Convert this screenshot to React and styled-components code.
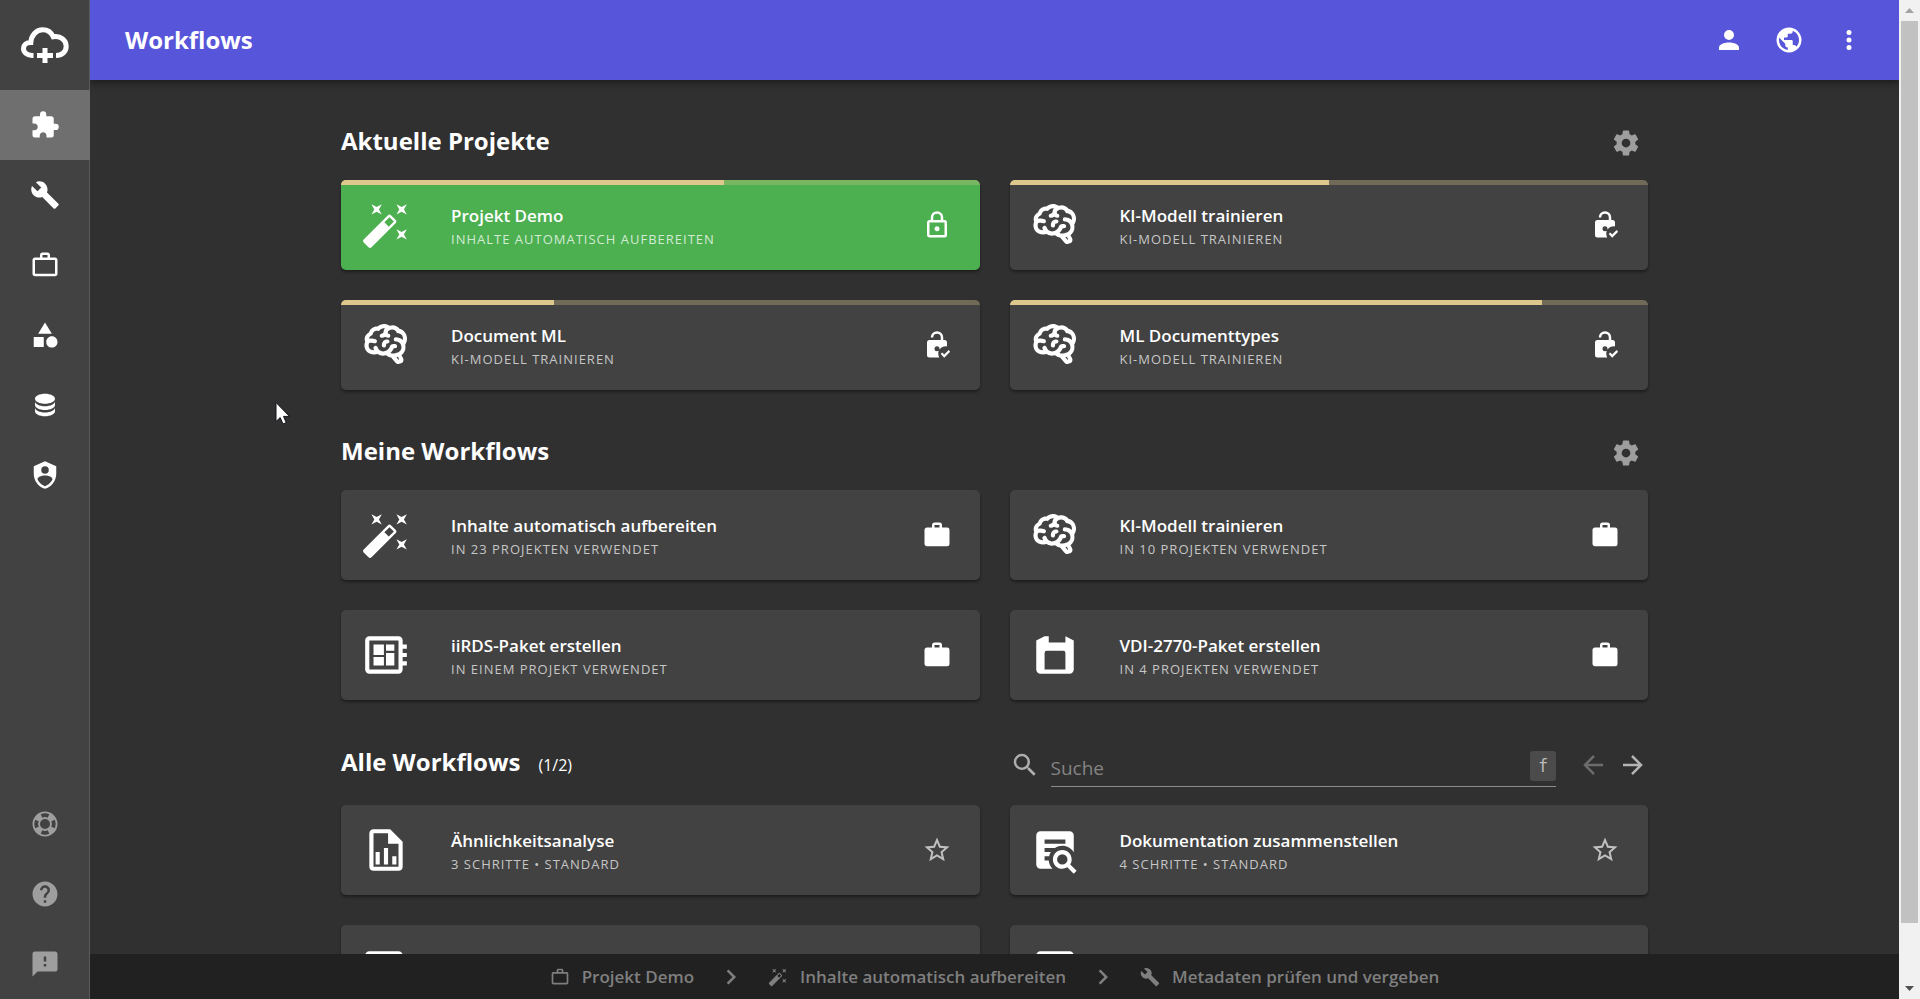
import React, { useState } from 'react';
import styled, { createGlobalStyle, ThemeProvider } from 'styled-components';

const theme = {
  primary: '#5755d9',
  background: '#303030',
  surface: '#424242',
  surfaceActive: '#6f6f6f',
  footer: '#212121',
  success: '#4caf50',
  accent: '#dfc88c',
  text: '#ffffff',
  textSecondary: '#c6c6c6',
  textMuted: '#9e9e9e',
  textDisabled: '#7f7f7f',
};

const GlobalStyle = createGlobalStyle`
  * {
    box-sizing: border-box;
  }

  body {
    margin: 0;
    background-color: #303030;
    color: #ffffff;
    font-family: 'Open Sans', 'Noto Sans', sans-serif;
  }

  button {
    padding: 0;
    border: none;
    background: none;
    color: inherit;
    font: inherit;
    cursor: pointer;
  }
`;

const paths = {
  puzzle: 'M20.5,11H19V7C19,5.89 18.1,5 17,5H13V3.5A2.5,2.5 0 0,0 10.5,1A2.5,2.5 0 0,0 8,3.5V5H4A2,2 0 0,0 2,7V10.8H3.5C5,10.8 6.2,12 6.2,13.5C6.2,15 5,16.2 3.5,16.2H2V20A2,2 0 0,0 4,22H7.8V20.5C7.8,19 9,17.8 10.5,17.8C12,17.8 13.2,19 13.2,20.5V22H17A2,2 0 0,0 19,20V16H20.5A2.5,2.5 0 0,0 23,13.5A2.5,2.5 0 0,0 20.5,11Z',
  wrench: 'M22.7,19L13.6,9.9C14.5,7.6 14,4.9 12.1,3C10.1,1 7.1,0.6 4.7,1.7L9,6L6,9L1.6,4.7C0.4,7.1 0.9,10.1 2.9,12.1C4.8,14 7.5,14.5 9.8,13.6L18.9,22.7C19.3,23.1 19.9,23.1 20.3,22.7L22.6,20.4C23.1,20 23.1,19.3 22.7,19Z',
  briefcaseOutline: 'M20,6C20.58,6 21.05,6.2 21.42,6.59C21.8,7 22,7.45 22,8V19C22,19.55 21.8,20 21.42,20.41C21.05,20.8 20.58,21 20,21H4C3.42,21 2.95,20.8 2.58,20.41C2.2,20 2,19.55 2,19V8C2,7.45 2.2,7 2.58,6.59C2.95,6.2 3.42,6 4,6H8V4C8,3.42 8.2,2.95 8.58,2.58C8.95,2.2 9.42,2 10,2H14C14.58,2 15.05,2.2 15.42,2.58C15.8,2.95 16,3.42 16,4V6H20M4,8V19H20V8H4M14,6V4H10V6H14Z',
  briefcase: 'M10,2H14A2,2 0 0,1 16,4V6H20A2,2 0 0,1 22,8V19A2,2 0 0,1 20,21H4C2.89,21 2,20.1 2,19V8C2,6.89 2.89,6 4,6H8V4C8,2.89 8.89,2 10,2M14,6V4H10V6H14Z',
  shape: 'M11,13.5V21.5H3V13.5H11M12,2L17.5,11H6.5L12,2M17.5,13C20,13 22,15 22,17.5C22,20 20,22 17.5,22C15,22 13,20 13,17.5C13,15 15,13 17.5,13Z',
  database: 'M12,3C7.58,3 4,4.79 4,7C4,9.21 7.58,11 12,11C16.42,11 20,9.21 20,7C20,4.79 16.42,3 12,3M4,9V12C4,14.21 7.58,16 12,16C16.42,16 20,14.21 20,12V9C20,11.21 16.42,13 12,13C7.58,13 4,11.21 4,9M4,14V17C4,19.21 7.58,21 12,21C16.42,21 20,19.21 20,17V14C20,16.21 16.42,18 12,18C7.58,18 4,16.21 4,14Z',
  shieldAccount: 'M12,1L3,5V11C3,16.55 6.84,21.74 12,23C17.16,21.74 21,16.55 21,11V5L12,1M12,5A3,3 0 0,1 15,8A3,3 0 0,1 12,11A3,3 0 0,1 9,8A3,3 0 0,1 12,5M17.13,17C15.92,18.85 14.11,20.24 12,20.92C9.89,20.24 8.08,18.85 6.87,17C6.53,16.5 6.24,16 6,15.47C6,13.82 8.71,12.47 12,12.47C15.29,12.47 18,13.79 18,15.47C17.76,16 17.47,16.5 17.13,17Z',
  lifebuoy: 'M19.79,15.41C20.74,13.24 20.74,10.75 19.79,8.59L17.05,9.83C17.65,11.21 17.65,12.78 17.06,14.17L19.79,15.41M15.42,4.21C13.25,3.26 10.76,3.26 8.59,4.21L9.83,6.94C11.22,6.35 12.79,6.35 14.18,6.95L15.42,4.21M4.21,8.58C3.26,10.76 3.26,13.24 4.21,15.42L6.95,14.17C6.35,12.79 6.35,11.21 6.95,9.82L4.21,8.58M8.59,19.79C10.76,20.74 13.25,20.74 15.42,19.78L14.18,17.05C12.8,17.65 11.22,17.65 9.84,17.06L8.59,19.79M12,2A10,10 0 0,1 22,12A10,10 0 0,1 12,22C6.47,22 2,17.5 2,12A10,10 0 0,1 12,2M12,8A4,4 0 0,0 8,12A4,4 0 0,0 12,16A4,4 0 0,0 16,12A4,4 0 0,0 12,8Z',
  help: 'M15.07,11.25L14.17,12.17C13.45,12.89 13,13.5 13,15H11V14.5C11,13.39 11.45,12.39 12.17,11.67L13.41,10.41C13.78,10.05 14,9.55 14,9C14,7.89 13.1,7 12,7A2,2 0 0,0 10,9H8A4,4 0 0,1 12,5A4,4 0 0,1 16,9C16,9.88 15.64,10.67 15.07,11.25M13,19H11V17H13M12,2A10,10 0 0,0 2,12A10,10 0 0,0 12,22A10,10 0 0,0 22,12C22,6.47 17.5,2 12,2Z',
  feedback: 'M13,10H11V6H13M13,14H11V12H13M20,2H4A2,2 0 0,0 2,4V22L6,18H20A2,2 0 0,0 22,16V4C22,2.89 21.1,2 20,2Z',
  account: 'M12,4A4,4 0 0,1 16,8A4,4 0 0,1 12,12A4,4 0 0,1 8,8A4,4 0 0,1 12,4M12,14C16.42,14 20,15.79 20,18V20H4V18C4,15.79 7.58,14 12,14Z',
  earth: 'M17.9,17.39C17.64,16.59 16.89,16 16,16H15V13A1,1 0 0,0 14,12H8V10H10A1,1 0 0,0 11,9V7H13A2,2 0 0,0 15,5V4.59C17.93,5.77 20,8.64 20,12C20,14.08 19.2,15.97 17.9,17.39M11,19.93C7.05,19.44 4,16.08 4,12C4,11.38 4.08,10.78 4.21,10.21L9,15V16A2,2 0 0,0 11,18M12,2A10,10 0 0,0 2,12A10,10 0 0,0 12,22A10,10 0 0,0 22,12A10,10 0 0,0 12,2Z',
  dots: 'M12,16A2,2 0 0,1 14,18A2,2 0 0,1 12,20A2,2 0 0,1 10,18A2,2 0 0,1 12,16M12,10A2,2 0 0,1 14,12A2,2 0 0,1 12,14A2,2 0 0,1 10,12A2,2 0 0,1 12,10M12,4A2,2 0 0,1 14,6A2,2 0 0,1 12,8A2,2 0 0,1 10,6A2,2 0 0,1 12,4Z',
  cog: 'M12,15.5A3.5,3.5 0 0,1 8.5,12A3.5,3.5 0 0,1 12,8.5A3.5,3.5 0 0,1 15.5,12A3.5,3.5 0 0,1 12,15.5M19.43,12.97C19.47,12.65 19.5,12.33 19.5,12C19.5,11.67 19.47,11.34 19.43,11L21.54,9.37C21.73,9.22 21.78,8.95 21.66,8.73L19.66,5.27C19.54,5.05 19.27,4.96 19.05,5.05L16.56,6.05C16.04,5.66 15.5,5.32 14.87,5.07L14.5,2.42C14.46,2.18 14.25,2 14,2H10C9.75,2 9.54,2.18 9.5,2.42L9.13,5.07C8.5,5.32 7.96,5.66 7.44,6.05L4.95,5.05C4.73,4.96 4.46,5.05 4.34,5.27L2.34,8.73C2.21,8.95 2.27,9.22 2.46,9.37L4.57,11C4.53,11.34 4.5,11.67 4.5,12C4.5,12.33 4.53,12.65 4.57,12.97L2.46,14.63C2.27,14.78 2.21,15.05 2.34,15.27L4.34,18.73C4.46,18.95 4.73,19.03 4.95,18.95L7.44,17.94C7.96,18.34 8.5,18.68 9.13,18.93L9.5,21.58C9.54,21.82 9.75,22 10,22H14C14.25,22 14.46,21.82 14.5,21.58L14.87,18.93C15.5,18.67 16.04,18.34 16.56,17.94L19.05,18.95C19.27,19.03 19.54,18.95 19.66,18.73L21.66,15.27C21.78,15.05 21.73,14.78 21.54,14.63L19.43,12.97Z',
  wand: 'M7.5,5.6L5,7L6.4,4.5L5,2L7.5,3.4L10,2L8.6,4.5L10,7L7.5,5.6M19.5,15.4L22,14L20.6,16.5L22,19L19.5,17.6L17,19L18.4,16.5L17,14L19.5,15.4M22,2L20.6,4.5L22,7L19.5,5.6L17,7L18.4,4.5L17,2L19.5,3.4L22,2M13.34,12.78L15.78,10.34L13.66,8.22L11.22,10.66L13.34,12.78M14.37,7.29L16.71,9.63C17.1,10 17.1,10.65 16.71,11.04L5.04,22.71C4.65,23.1 4,23.1 3.63,22.71L1.29,20.37C0.9,20 0.9,19.35 1.29,18.96L12.96,7.29C13.35,6.9 14,6.9 14.37,7.29Z',
  brain: 'M21.33,12.91C21.42,14.46 20.71,15.95 19.44,16.86L20.21,18.35C20.44,18.8 20.47,19.33 20.27,19.8C20.08,20.27 19.69,20.64 19.21,20.8L18.42,21.05C18.25,21.11 18.06,21.14 17.88,21.14C17.37,21.14 16.89,20.91 16.56,20.5L14.44,18C13.55,17.85 12.71,17.47 12,16.9C11.5,17.05 11,17.13 10.5,17.13C9.62,17.13 8.74,16.86 8,16.34C7.47,16.5 6.93,16.57 6.38,16.56C5.59,16.57 4.81,16.41 4.08,16.11C2.65,15.47 1.7,14.07 1.65,12.5C1.57,11.78 1.69,11.05 2,10.39C1.71,9.64 1.68,8.82 1.93,8.06C2.3,7.11 3,6.32 3.87,5.82C4.45,4.13 6.08,3 7.87,3.12C9.47,1.62 11.92,1.46 13.7,2.75C14.12,2.64 14.56,2.58 15,2.58C16.36,2.55 17.65,3.15 18.5,4.22C20.54,4.75 22,6.57 22.08,8.69C22.13,9.8 21.83,10.89 21.22,11.82C21.29,12.18 21.33,12.54 21.33,12.91M16.33,11.5C16.9,11.57 17.35,12 17.35,12.57A1,1 0 0,1 16.35,13.57H15.72C15.4,14.47 14.84,15.26 14.1,15.86C14.35,15.95 14.61,16 14.87,16.07C20,16 19.4,12.87 19.4,12.82C19.34,11.39 18.14,10.27 16.71,10.33A1,1 0 0,1 15.71,9.33A1,1 0 0,1 16.71,8.33C17.94,8.36 19.12,8.82 20.04,9.63C20.09,9.34 20.12,9.04 20.12,8.74C20.06,7.5 19.5,6.42 17.25,6.21C16,3.25 12.85,4.89 12.85,5.81V5.81C12.82,6.04 13.06,6.53 13.1,6.56A1,1 0 0,1 14.1,7.56C14.1,8.11 13.65,8.56 13.1,8.56V8.56C12.57,8.54 12.07,8.34 11.67,8C11.19,8.31 10.64,8.5 10.07,8.56V8.56C9.5,8.61 9.03,8.21 9,7.66C8.92,7.1 9.33,6.61 9.88,6.56C10.04,6.54 10.82,6.42 10.82,5.79V5.79C10.82,5.13 11.07,4.5 11.5,4C10.58,3.75 9.59,4.08 8.59,5.29C6.75,5 6,5.25 5.45,7.2C4.5,7.67 4,8 3.78,9C4.86,8.78 5.97,8.87 7,9.25C7.5,9.44 7.78,10 7.59,10.54C7.4,11.06 6.82,11.32 6.3,11.13C5.57,10.81 4.75,10.79 4,11.07C3.68,11.34 3.68,11.9 3.68,12.34C3.68,13.08 4.05,13.77 4.68,14.17C5.21,14.44 5.8,14.58 6.39,14.57C6.24,14.31 6.11,14.04 6,13.76C5.81,13.22 6.1,12.63 6.64,12.44C7.18,12.25 7.77,12.54 7.96,13.08C8.36,14.22 9.38,15 10.58,15.13C11.95,15.06 13.17,14.25 13.77,13C14,11.62 15.11,11.5 16.33,11.5M18.33,18.97L17.71,17.67L17,17.83L18,19.08L18.33,18.97M13.68,10.36C13.7,9.83 13.3,9.38 12.77,9.33C12.06,9.29 11.37,9.53 10.84,10C10.27,10.58 9.97,11.38 10,12.19A1,1 0 0,0 11,13.19C11.57,13.19 12,12.74 12,12.19C12,11.92 12.07,11.65 12.23,11.43C12.35,11.33 12.5,11.28 12.66,11.28C13.21,11.31 13.68,10.9 13.68,10.36Z',
  lock: 'M12,17C10.89,17 10,16.1 10,15C10,13.89 10.89,13 12,13A2,2 0 0,1 14,15A2,2 0 0,1 12,17M18,20V10H6V20H18M18,8A2,2 0 0,1 20,10V20A2,2 0 0,1 18,22H6C4.89,22 4,21.1 4,20V10C4,8.89 4.89,8 6,8H7V6A5,5 0 0,1 12,1A5,5 0 0,1 17,6V8H18M12,3A3,3 0 0,0 9,6V8H15V6A3,3 0 0,0 12,3Z',
  lockOpenCheck: 'M18,8A2,2 0 0,1 20,10V13.1C19.7,13 19.3,13 19,13C15.7,13 13,15.7 13,19C13,20.1 13.3,21.1 13.8,22H6A2,2 0 0,1 4,20V10A2,2 0 0,1 6,8H15V6A3,3 0 0,0 9,6H7A5,5 0 0,1 17,6V8H18M12,13A2,2 0 0,0 10,15A2,2 0 0,0 12,17A2,2 0 0,0 14,15A2,2 0 0,0 12,13M17.75,22.16L15,19.16L16.16,18L17.75,19.59L21.34,16L22.5,17.41L17.75,22.16Z',
  board: 'M22,9V7H20V5A2,2 0 0,0 18,3H4A2,2 0 0,0 2,5V19A2,2 0 0,0 4,21H18A2,2 0 0,0 20,19V17H22V15H20V13H22V11H20V9H22M18,19H4V5H18V19M6,13H11V17H6V13M12,7H16V10H12V7M6,7H11V12H6V7M12,11H16V17H12V11Z',
  disk: 'M3,5L7,3H9V6H17V3L21,5V19A2,2 0 0,1 19,21H5A2,2 0 0,1 3,19V5M7,11V19H17V11A1,1 0 0,0 16,10H8A1,1 0 0,0 7,11Z',
  fileChart: 'M14,2H6C4.89,2 4,2.9 4,4V20C4,21.11 4.89,22 6,22H18C19.11,22 20,21.11 20,20V8L14,2M18,20H6V4H13V9H18V20M9,13V19H7V13H9M15,15V19H17V15H15M11,11V19H13V11H11Z',
  textSearch: 'M15.5,12C18,12 20,14 20,16.5C20,17.38 19.75,18.21 19.31,18.9L22.39,22L21,23.39L17.88,20.32C17.19,20.75 16.37,21 15.5,21C13,21 11,19 11,16.5C11,14 13,12 15.5,12M15.5,14A2.5,2.5 0 0,0 13,16.5A2.5,2.5 0 0,0 15.5,19A2.5,2.5 0 0,0 18,16.5A2.5,2.5 0 0,0 15.5,14M5,3H19A2,2 0 0,1 21,5V13.03C19.85,11.2 17.8,10 15.5,10C14.2,10 13,10.4 12,11H7V13H10C9.6,13.6 9.3,14.3 9.17,15H7V17H9C9.1,18.5 9.8,20 10.81,21H5A2,2 0 0,1 3,19V5A2,2 0 0,1 5,3M7,7V9H17V7H7Z',
  package: 'M5,3H19A2,2 0 0,1 21,5V19A2,2 0 0,1 19,21H5A2,2 0 0,1 3,19V5A2,2 0 0,1 5,3M7,7V9H17V7H7M7,11V13H17V11H7M7,15V17H14V15H7Z',
  star: 'M12,15.39L8.24,17.66L9.23,13.38L5.91,10.5L10.29,10.13L12,6.09L13.71,10.13L18.09,10.5L14.77,13.38L15.76,17.66M22,9.24L14.81,8.63L12,2L9.19,8.63L2,9.24L7.45,13.97L5.82,21L12,17.27L18.18,21L16.54,13.97L22,9.24Z',
  magnify: 'M9.5,3A6.5,6.5 0 0,1 16,9.5C16,11.11 15.41,12.59 14.44,13.73L14.71,14H15.5L20.5,19L19,20.5L14,15.5V14.71L13.73,14.44C12.59,15.41 11.11,16 9.5,16A6.5,6.5 0 0,1 3,9.5A6.5,6.5 0 0,1 9.5,3M9.5,5C7,5 5,7 5,9.5C5,12 7,14 9.5,14C12,14 14,12 14,9.5C14,7 12,5 9.5,5Z',
  arrowLeft: 'M20,11V13H8L13.5,18.5L12.08,19.92L4.16,12L12.08,4.08L13.5,5.5L8,11H20Z',
  arrowRight: 'M4,11V13H16L10.5,18.5L11.92,19.92L19.84,12L11.92,4.08L10.5,5.5L16,11H4Z',
  chevron: 'M8.59,16.58L13.17,12L8.59,7.41L10,6L16,12L10,18L8.59,16.58Z',
};

const Svg = styled.svg`
  display: block;
  flex: none;
  fill: currentColor;
`;

const Icon = ({ name, size = 30 }) => (
  <Svg viewBox="0 0 24 24" width={size} height={size} fillRule="evenodd" aria-hidden="true">
    <path d={paths[name]} />
  </Svg>
);

const Page = styled.div`
  display: flex;
  height: 100vh;
  background-color: ${({ theme }) => theme.background};
`;

const Sidebar = styled.nav`
  display: flex;
  flex-direction: column;
  flex: none;
  width: 90px;
  background-color: ${({ theme }) => theme.surface};
  border-right: 1px solid #5a5a5a;
`;

const Logo = styled.a`
  display: flex;
  align-items: center;
  justify-content: center;
  height: 90px;
  color: ${({ theme }) => theme.text};
`;

const NavButton = styled.button`
  display: flex;
  align-items: center;
  justify-content: center;
  height: 70px;
  /* keeps the icons centred on the full bar, border included */
  margin-right: -1px;
  color: ${({ theme, $muted }) => ($muted ? theme.textMuted : theme.text)};
  background-color: ${({ theme, $active }) => ($active ? theme.surfaceActive : 'transparent')};
`;

const Spacer = styled.div`
  flex: 1;
`;

const Main = styled.div`
  display: flex;
  flex-direction: column;
  flex: 1;
  min-width: 0;
  overflow: hidden;
`;

const Header = styled.header`
  display: flex;
  align-items: center;
  justify-content: space-between;
  flex: none;
  height: 80px;
  padding: 0 35px;
  background-color: ${({ theme }) => theme.primary};
  box-shadow: 0 2px 8px rgba(0, 0, 0, 0.5);
  z-index: 1;
`;

const Title = styled.h1`
  margin: 0;
  font-size: 24px;
  font-weight: 700;
  line-height: 32px;
`;

const HeaderActions = styled.div`
  display: flex;
  gap: 30px;
`;

const IconButton = styled.button`
  display: flex;
  color: ${({ $color }) => $color || '#ffffff'};

  &:disabled {
    cursor: default;
  }
`;

const Content = styled.main`
  flex: 1;
  min-height: 0;
  padding: 0 40px;
  overflow-y: auto;
  scrollbar-width: none;
`;

const Container = styled.div`
  max-width: 1307px;
  margin: 0 auto;
`;

const SectionHeader = styled.div`
  display: flex;
  align-items: center;
  justify-content: space-between;
  height: ${({ $tall }) => ($tall ? 105 : 100)}px;
  padding-top: 25px;
  padding-right: ${({ $tall }) => ($tall ? 0 : 7)}px;
`;

const SectionTitle = styled.h2`
  margin: 0;
  padding-bottom: 4px;
  font-size: 24px;
  font-weight: 700;
  line-height: 32px;
`;

const PageCount = styled.span`
  margin-left: 18px;
  font-size: 16px;
  font-weight: 400;
`;

const CardGrid = styled.div`
  display: grid;
  grid-template-columns: 1fr 1fr;
  gap: 30px;
`;

const Card = styled.article`
  display: flex;
  flex-direction: column;
  height: 90px;
  border-radius: 5px;
  background-color: ${({ theme, $active }) => ($active ? theme.success : theme.surface)};
  box-shadow: 0 2px 3px rgba(0, 0, 0, 0.4);
  overflow: hidden;
`;

const Progress = styled.div`
  height: 5px;
  /* the bar lies in the card's top padding, so the body stays centred */
  margin-bottom: -5px;
  background-color: rgba(223, 200, 140, 0.3);
`;

const ProgressBar = styled.div`
  height: 100%;
  background-color: ${({ theme }) => theme.accent};
`;

const CardBody = styled.div`
  display: flex;
  align-items: center;
  flex: 1;
  padding: 0 28px 0 20px;
`;

const CardText = styled.div`
  flex: 1;
  min-width: 0;
  margin-left: 40px;
  padding-top: 4px;
`;

const CardTitle = styled.h3`
  margin: 0;
  font-size: 17px;
  font-weight: 600;
  line-height: 24px;
`;

const CardSubtitle = styled.p`
  margin: 0;
  color: ${({ theme, $active }) => ($active ? '#d2ecd3' : theme.textSecondary)};
  font-size: 13px;
  line-height: 22px;
  letter-spacing: 1px;
  text-transform: uppercase;
`;

const SearchBar = styled.div`
  display: flex;
  align-items: center;
  width: calc(50% - 15px);
  color: #aeaeae;
`;

const SearchField = styled.label`
  display: flex;
  align-items: center;
  flex: 1;
  height: 40px;
  margin: 3px 22px 0 11px;
  border-bottom: 1px solid #8c8c8c;
`;

const SearchInput = styled.input`
  flex: 1;
  min-width: 0;
  padding: 4px 0 0;
  border: none;
  outline: none;
  background: none;
  color: ${({ theme }) => theme.text};
  font-family: inherit;
  font-size: 19px;
  line-height: 28px;

  &::placeholder {
    color: #838383;
    opacity: 1;
  }
`;

const Key = styled.kbd`
  display: flex;
  align-items: center;
  justify-content: center;
  width: 26px;
  height: 30px;
  border-radius: 3px;
  background-color: #4b4b4b;
  color: #b9b9b9;
  font-family: 'DejaVu Sans Mono', monospace;
  font-size: 17px;
`;

const Pager = styled.div`
  display: flex;
  gap: 10px;
`;

const Footer = styled.footer`
  display: flex;
  align-items: center;
  justify-content: center;
  gap: 22px;
  flex: none;
  height: 45px;
  background-color: ${({ theme }) => theme.footer};
  color: ${({ theme }) => theme.textDisabled};
`;

const Crumb = styled.a`
  display: flex;
  align-items: center;
  gap: 12px;
  color: inherit;
  font-size: 17px;
  font-weight: 600;
  line-height: 24px;
  text-decoration: none;
`;

const Scrollbar = styled.div`
  display: flex;
  flex-direction: column;
  align-items: center;
  flex: none;
  width: 21px;
  background-color: #f1f1f1;
`;

const ScrollArrow = styled.div`
  display: flex;
  align-items: center;
  justify-content: center;
  height: 21px;
  color: ${({ $end }) => ($end ? '#505050' : '#a3a3a3')};
`;

const ScrollTrack = styled.div`
  flex: 1;
  width: 17px;
`;

const ScrollThumb = styled.div`
  height: calc(100% - 55px);
  background-color: #c1c1c1;
`;

const Cursor = styled.svg`
  position: absolute;
  left: 275px;
  top: 401px;
  z-index: 2;
`;

const mainNav = [
  { icon: 'puzzle', label: 'Workflows' },
  { icon: 'wrench', label: 'Werkzeuge' },
  { icon: 'briefcaseOutline', label: 'Projekte' },
  { icon: 'shape', label: 'Typen' },
  { icon: 'database', label: 'Daten' },
  { icon: 'shieldAccount', label: 'Administration' },
];

const bottomNav = [
  { icon: 'lifebuoy', label: 'Support' },
  { icon: 'help', label: 'Hilfe' },
  { icon: 'feedback', label: 'Feedback' },
];

const projects = [
  { icon: 'wand', title: 'Projekt Demo', subtitle: 'Inhalte automatisch aufbereiten', progress: 3 / 5, action: 'lock', active: true },
  { icon: 'brain', title: 'KI-Modell trainieren', subtitle: 'KI-Modell trainieren', progress: 1 / 2, action: 'lockOpenCheck' },
  { icon: 'brain', title: 'Document ML', subtitle: 'KI-Modell trainieren', progress: 1 / 3, action: 'lockOpenCheck' },
  { icon: 'brain', title: 'ML Documenttypes', subtitle: 'KI-Modell trainieren', progress: 5 / 6, action: 'lockOpenCheck' },
];

const myWorkflows = [
  { icon: 'wand', title: 'Inhalte automatisch aufbereiten', subtitle: 'In 23 Projekten verwendet', action: 'briefcase' },
  { icon: 'brain', title: 'KI-Modell trainieren', subtitle: 'In 10 Projekten verwendet', action: 'briefcase' },
  { icon: 'board', title: 'iiRDS-Paket erstellen', subtitle: 'In einem Projekt verwendet', action: 'briefcase' },
  { icon: 'disk', title: 'VDI-2770-Paket erstellen', subtitle: 'In 4 Projekten verwendet', action: 'briefcase' },
];

const allWorkflows = [
  { icon: 'fileChart', title: 'Ähnlichkeitsanalyse', subtitle: '3 Schritte • Standard', action: 'star' },
  { icon: 'textSearch', title: 'Dokumentation zusammenstellen', subtitle: '4 Schritte • Standard', action: 'star' },
  { icon: 'board', title: 'iiRDS-Paket erstellen', subtitle: '4 Schritte • Standard', action: 'star' },
  { icon: 'package', title: 'ZIP-Paket erstellen', subtitle: '3 Schritte • Standard', action: 'star' },
];

const actionLabels = {
  lock: 'Projekt sperren',
  lockOpenCheck: 'Projekt freigegeben',
  briefcase: 'Projekte anzeigen',
  star: 'Als Favorit merken',
};

const WorkflowCard = ({ item }) => (
  <Card $active={item.active}>
    {item.progress && (
      <Progress>
        <ProgressBar style={{ width: `${item.progress * 100}%` }} />
      </Progress>
    )}
    <CardBody>
      <Icon name={item.icon} size={50} />
      <CardText>
        <CardTitle>{item.title}</CardTitle>
        <CardSubtitle $active={item.active}>{item.subtitle}</CardSubtitle>
      </CardText>
      <IconButton $color={item.action === 'star' ? '#c0c0c0' : '#ffffff'} aria-label={actionLabels[item.action]}>
        <Icon name={item.action} />
      </IconButton>
    </CardBody>
  </Card>
);

const Cards = ({ items }) => (
  <CardGrid>
    {items.map((item) => (
      <WorkflowCard key={item.title} item={item} />
    ))}
  </CardGrid>
);

const App = () => {
  const [active, setActive] = useState('puzzle');
  const [search, setSearch] = useState('');

  const visible = allWorkflows.filter(({ title }) => title.toLowerCase().includes(search.toLowerCase()));

  return (
    <ThemeProvider theme={theme}>
      <GlobalStyle />
      <Page>
        <Sidebar>
          <Logo href="#" aria-label="Startseite">
            <svg width="50" height="38" viewBox="20 26 50 38" fill="none" stroke="currentColor" strokeWidth="5">
              <path d="M33.5,55.5H32C27,55.5 23.5,52.3 23.5,48.5C23.5,45 26.2,42.6 30.8,42.6C31.2,35.2 36.2,29.8 42.8,29.8C47.4,29.8 51.2,32.4 53.2,36.8C60.6,35.4 66.2,40 66.2,46.2C66.2,51.6 62,55.5 56,55.5" />
              <path d="M37,55.5H53M45,48V63" />
            </svg>
          </Logo>
          {mainNav.map(({ icon, label }) => (
            <NavButton key={icon} $active={icon === active} aria-label={label} onClick={() => setActive(icon)}>
              <Icon name={icon} />
            </NavButton>
          ))}
          <Spacer />
          {bottomNav.map(({ icon, label }) => (
            <NavButton key={icon} $muted aria-label={label}>
              <Icon name={icon} />
            </NavButton>
          ))}
        </Sidebar>

        <Main>
          <Header>
            <Title>Workflows</Title>
            <HeaderActions>
              <IconButton aria-label="Benutzer"><Icon name="account" /></IconButton>
              <IconButton aria-label="Sprache"><Icon name="earth" /></IconButton>
              <IconButton aria-label="Mehr"><Icon name="dots" /></IconButton>
            </HeaderActions>
          </Header>

          <Content>
            <Container>
              <SectionHeader>
                <SectionTitle>Aktuelle Projekte</SectionTitle>
                <IconButton $color="#9e9e9e" aria-label="Projekte einstellen"><Icon name="cog" /></IconButton>
              </SectionHeader>
              <Cards items={projects} />

              <SectionHeader>
                <SectionTitle>Meine Workflows</SectionTitle>
                <IconButton $color="#9e9e9e" aria-label="Workflows einstellen"><Icon name="cog" /></IconButton>
              </SectionHeader>
              <Cards items={myWorkflows} />

              <SectionHeader $tall>
                <SectionTitle>
                  Alle Workflows
                  <PageCount>(1/2)</PageCount>
                </SectionTitle>
                <SearchBar>
                  <Icon name="magnify" />
                  <SearchField>
                    <SearchInput
                      type="text"
                      aria-label="Suche"
                      value={search}
                      onChange={(e) => setSearch(e.target.value)}
                      placeholder="Suche"
                    />
                    <Key>f</Key>
                  </SearchField>
                  <Pager>
                    <IconButton $color="#6c6c6c" disabled aria-label="Vorherige Seite"><Icon name="arrowLeft" /></IconButton>
                    <IconButton $color="#b4b4b4" aria-label="Nächste Seite"><Icon name="arrowRight" /></IconButton>
                  </Pager>
                </SearchBar>
              </SectionHeader>
              <Cards items={visible} />
            </Container>
          </Content>

          <Footer>
            <Crumb href="#"><Icon name="briefcaseOutline" size={20} />Projekt Demo</Crumb>
            <Icon name="chevron" />
            <Crumb href="#"><Icon name="wand" size={20} />Inhalte automatisch aufbereiten</Crumb>
            <Icon name="chevron" />
            <Crumb href="#"><Icon name="wrench" size={20} />Metadaten prüfen und vergeben</Crumb>
          </Footer>
        </Main>

        <Scrollbar aria-hidden="true">
          <ScrollArrow>
            <Svg width="9" height="5" viewBox="0 0 9 5"><path d="M0,5L4.5,0L9,5Z" /></Svg>
          </ScrollArrow>
          <ScrollTrack>
            <ScrollThumb />
          </ScrollTrack>
          <ScrollArrow $end>
            <Svg width="9" height="5" viewBox="0 0 9 5"><path d="M0,0L4.5,5L9,0Z" /></Svg>
          </ScrollArrow>
        </Scrollbar>
      </Page>

      <Cursor width="16" height="25" viewBox="0 0 16 25" aria-hidden="true">
        <path d="M1,1.5V20.5L5.2,16.6L8,23L11.2,21.6L8.5,15.4H14.5Z" fill="#ffffff" stroke="#15151c" strokeWidth="1" />
      </Cursor>
    </ThemeProvider>
  );
};

export default App;
